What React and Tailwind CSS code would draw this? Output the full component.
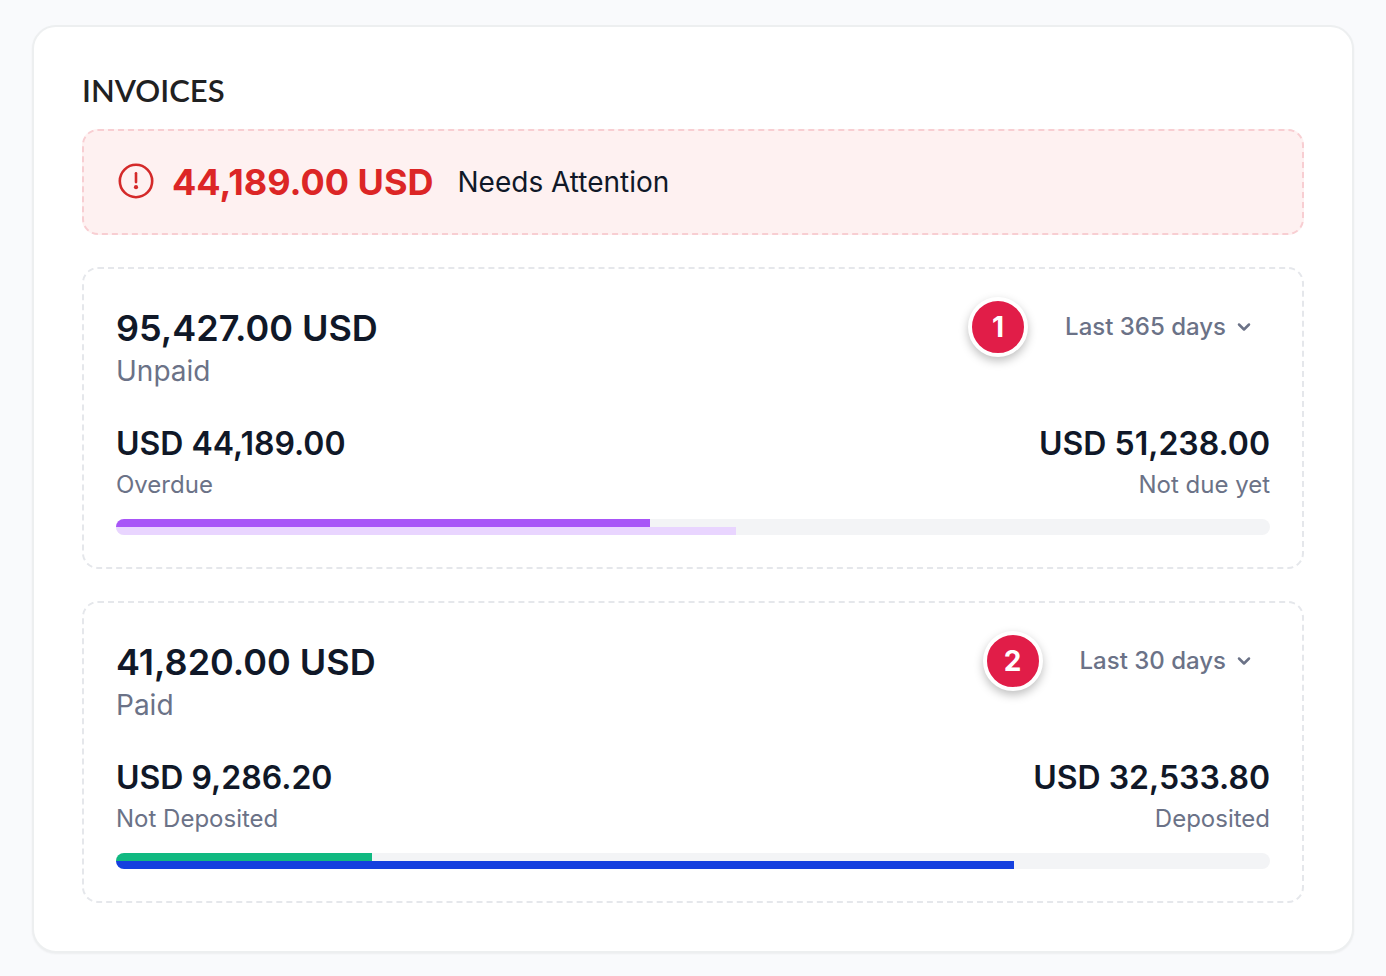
import { ChevronDown } from "lucide-react";

const periods = ["Last 30 days", "Last 90 days", "Last 365 days"];

const panels = [
  {
    id: "unpaid",
    total: "95,427.00 USD",
    label: "Unpaid",
    step: 1,
    period: "Last 365 days",
    left: { amount: "USD 44,189.00", label: "Overdue", share: 46.3, color: "bg-[#a855f7]" },
    right: { amount: "USD 51,238.00", label: "Not due yet", share: 53.7, color: "bg-[#e9d5ff]" },
  },
  {
    id: "paid",
    total: "41,820.00 USD",
    label: "Paid",
    step: 2,
    period: "Last 30 days",
    left: { amount: "USD 9,286.20", label: "Not Deposited", share: 22.2, color: "bg-[#10b981]" },
    right: { amount: "USD 32,533.80", label: "Deposited", share: 77.8, color: "bg-[#1540df]" },
  },
];

function AlertIcon() {
  return (
    <svg className="size-10 shrink-0 text-[#d42a2a]" viewBox="0 0 40 40" fill="none" aria-hidden="true">
      <circle cx="20" cy="19" r="16.2" stroke="currentColor" strokeWidth="2.6" />
      <path d="M20 11.3v8.8" stroke="currentColor" strokeWidth="2.6" strokeLinecap="round" />
      <circle cx="20" cy="25.2" r="2.1" fill="currentColor" />
    </svg>
  );
}

function Figure({ amount, label }) {
  return (
    <div>
      <p className="text-[32px] leading-[50px] font-semibold text-gray-900">{amount}</p>
      <p className="text-2xl leading-8 text-[#6b7287]">{label}</p>
    </div>
  );
}

function PeriodSelect({ label, value }) {
  return (
    <div className="grid items-center">
      <select
        aria-label={`${label} period`}
        defaultValue={value}
        className="col-start-1 row-start-1 field-sizing-content h-13 appearance-none bg-transparent pr-11 text-2xl font-medium text-[#6b7287]"
      >
        {periods.map((p) => (
          <option key={p}>{p}</option>
        ))}
      </select>
      <ChevronDown
        className="pointer-events-none col-start-1 row-start-1 mr-4 size-5 justify-self-end text-[#6b7287]"
        strokeWidth={3}
        aria-hidden="true"
      />
    </div>
  );
}

function Panel({ total, label, step, period, left, right }) {
  return (
    <section className="rounded-2xl border-2 border-dashed border-gray-200 p-8">
      <div className="flex items-start justify-between">
        <div>
          <p className="text-4xl leading-[54px] font-semibold text-gray-900">{total}</p>
          <p className="text-[28px] leading-8 text-[#6b7287]">{label}</p>
        </div>
        <div className="flex h-13 items-center gap-[37px]">
          <span className="flex size-15 items-center justify-center rounded-full border-4 border-white bg-[#e11d48] text-[28px] leading-8 font-bold text-white shadow-[0_4px_10px_rgba(0,0,0,0.25)]">
            {step}
          </span>
          <PeriodSelect label={label} value={period} />
        </div>
      </div>
      <div className="mt-8 flex justify-between">
        <Figure {...left} />
        <div className="text-right">
          <Figure {...right} />
        </div>
      </div>
      <div className="mt-[18px] overflow-hidden rounded-full bg-gray-100">
        <div className={`h-2 ${left.color}`} style={{ width: `${left.share}%` }} />
        <div className={`h-2 ${right.color}`} style={{ width: `${right.share}%` }} />
      </div>
    </section>
  );
}

export default function App() {
  return (
    <main className="min-h-screen bg-[#f9fafc] px-8 py-[25px] font-['Inter',sans-serif]">
      <div className="rounded-3xl border-2 border-[#edeff0] bg-white px-12 pt-10 pb-12 shadow-xs">
        <h1 className="mb-4 font-['Lato',sans-serif] text-[31px] leading-[46px] font-semibold text-[#1f2122]">INVOICES</h1>
        <div className="flex flex-col gap-8">
          <div className="flex h-[106px] items-center rounded-2xl border-2 border-dashed border-[#f8ced2] bg-[#fef1f1] px-8">
            <AlertIcon />
            <p className="ml-4 text-4xl font-bold text-[#dc2626]">44,189.00 USD</p>
            <p className="ml-6 text-[28px] leading-8 text-gray-900">Needs Attention</p>
          </div>
          {panels.map((p) => (
            <Panel key={p.id} {...p} />
          ))}
        </div>
      </div>
    </main>
  );
}
